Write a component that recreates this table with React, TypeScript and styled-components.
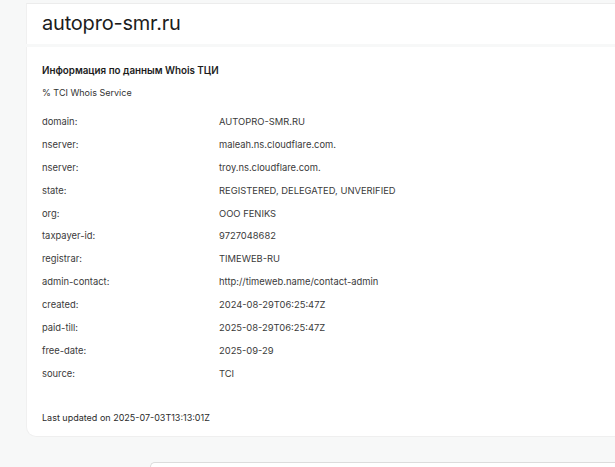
import React from "react";
import styled, { createGlobalStyle } from "styled-components";

const GlobalStyle = createGlobalStyle`
  html, body {
    margin: 0;
    padding: 0;
    background: #f7f8f8;
    font-family: Inter, "Noto Sans", sans-serif;
    color: #2b2b2b;
  }
`;

const rows: [string, string][] = [
  ["domain:", "AUTOPRO-SMR.RU"],
  ["nserver:", "maleah.ns.cloudflare.com."],
  ["nserver:", "troy.ns.cloudflare.com."],
  ["state:", "REGISTERED, DELEGATED, UNVERIFIED"],
  ["org:", "OOO FENIKS"],
  ["taxpayer-id:", "9727048682"],
  ["registrar:", "TIMEWEB-RU"],
  ["admin-contact:", "http://timeweb.name/contact-admin"],
  ["created:", "2024-08-29T06:25:47Z"],
  ["paid-till:", "2025-08-29T06:25:47Z"],
  ["free-date:", "2025-09-29"],
  ["source:", "TCI"],
];

const App: React.FC = () => {
  return (
    <>
      <GlobalStyle />
      <Page>
        <HeaderCard>
          <DomainTitle>autopro-smr.ru</DomainTitle>
        </HeaderCard>
        <Card>
          <Heading>Информация по данным Whois ТЦИ</Heading>
          <Service>% TCI Whois Service</Service>
          <Table>
            {rows.map(([k, v], i) => (
              <Row key={`row-${i}`}>
                <Label>{k}</Label>
                <Value>{v}</Value>
              </Row>
            ))}
          </Table>
          <Updated>Last updated on 2025-07-03T13:13:01Z</Updated>
        </Card>
        <BottomBar />
      </Page>
    </>
  );
};

const Page = styled.div`
  height: 467px;
  overflow: hidden;
  padding-left: 26px;
  padding-top: 3px;
  display: flex;
  flex-direction: column;
  box-sizing: border-box;
`;

const HeaderCard = styled.div`
  height: 41px;
  background: #fff;
  border-top: 1px solid #ececec;
  border-left: 1px solid #f0f0f0;
  display: flex;
  align-items: center;
  padding-left: 15px;
  padding-bottom: 2px;
  box-sizing: border-box;
`;

const DomainTitle = styled.div`
  font-size: 20px;
  letter-spacing: -0.2px;
  color: #1c1c1c;
`;

const Card = styled.div`
  margin-top: 3px;
  background: #fff;
  border-left: 1px solid #f0f0f0;
  border-bottom: 1px solid #efefef;
  border-radius: 0 0 0 10px;
  padding: 17px 15px 14px 15px;
  height: 390px;
  box-sizing: border-box;
  display: flex;
  flex-direction: column;
`;

const Heading = styled.div`
  font-size: 9.8px;
  font-weight: 600;
  color: #1c1c1c;
  line-height: 13px;
`;

const Service = styled.div`
  margin-top: 10px;
  font-size: 9px;
  line-height: 12px;
  color: #333;
`;

const Table = styled.div`
  margin-top: 11px;
  display: flex;
  flex-direction: column;
`;

const Row = styled.div`
  display: grid;
  grid-template-columns: 177px 1fr;
  height: 22.9px;
  align-items: center;
  font-size: 9.4px;
  color: #3a3a3a;
`;

const Label = styled.div``;
const Value = styled.div``;

const Updated = styled.div`
  margin-top: 27px;
  font-size: 9px;
  color: #2b2b2b;
`;

const BottomBar = styled.div`
  margin-top: 25px;
  margin-left: 124px;
  flex: 1;
  background: #fff;
  border: 1px solid #dcdcdc;
  border-right: none;
  border-bottom: none;
  border-radius: 8px 0 0 0;
`;

export default App;
